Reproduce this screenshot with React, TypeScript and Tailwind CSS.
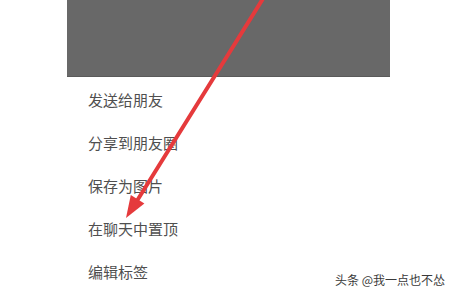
import React from 'react';

const items = ['发送给朋友', '分享到朋友圈', '保存为图片', '在聊天中置顶', '编辑标签'];

const App: React.FC = () => {
  return (
    <div className="relative w-[450px] h-[300px] bg-white overflow-hidden font-['Noto_Sans_CJK_SC','Noto_Sans',sans-serif]">
      <div className="ml-[67px] w-[323px] h-[77px] bg-[#686868] border-b border-[#5a5a5a]" />

      <ul className="pt-[1px] pl-[88px]">
        {items.map((label) => (
          <li key={label} className="h-[43px] flex items-center text-[15px] text-[#4f4f4f] leading-none">
            {label}
          </li>
        ))}
      </ul>

      {/* annotation arrow */}
      <svg className="absolute inset-0 pointer-events-none" width="450" height="300" viewBox="0 0 450 300">
        <line x1="264" y1="-3" x2="135" y2="204" stroke="#e53a3c" strokeWidth="4" strokeLinecap="round" />
        <polygon points="126,218 130.8,195.1 144.4,203.5" fill="#e53a3c" />
      </svg>

      {/* watermark */}
      <div className="absolute left-[335px] top-[274px] text-[12px] leading-none text-[#3a3a3a] [text-shadow:0_0_2px_#fff,0_0_1px_#fff] whitespace-nowrap">
        头条 @我一点也不怂
      </div>
    </div>
  );
};

export default App;
